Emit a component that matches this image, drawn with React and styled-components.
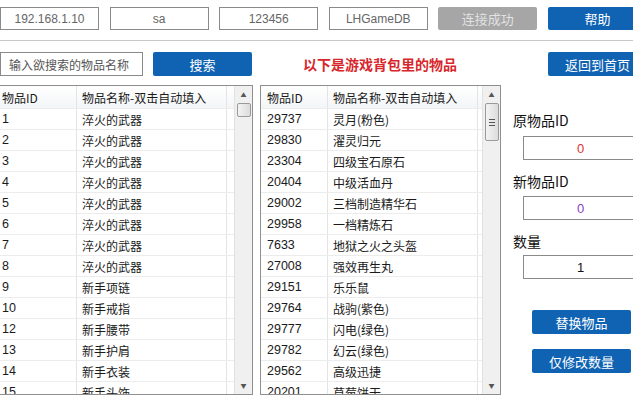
import React from 'react';
import styled, { createGlobalStyle } from 'styled-components';

const Global = createGlobalStyle`
  body {
    margin: 0;
    background: #fff;
    font-family: "Noto Sans CJK SC", "Noto Sans", sans-serif;
  }
`;

const Page = styled.div`
  width: 633px;
  height: 412px;
  overflow: hidden;
`;

const TopBar = styled.div`
  display: flex;
  gap: 10.6px;
  padding-top: 7px;
  height: 23px;
`;

const Field = styled.div`
  flex: none;
  width: ${p => p.w || 99}px;
  height: ${p => p.h || 23}px;
  box-sizing: border-box;
  border: 1px solid #8a8a8a;
  display: flex;
  align-items: center;
  justify-content: ${p => (p.left ? 'flex-start' : 'center')};
  padding-left: ${p => (p.left ? 8 : 0)}px;
  font-size: 12px;
  color: ${p => p.color || '#666'};
  font-family: "Liberation Sans", "Noto Sans CJK SC", sans-serif;
  background: #fff;
`;

const Button = styled.div`
  flex: none;
  width: ${p => p.w || 99}px;
  height: ${p => p.h || 24}px;
  box-sizing: border-box;
  border-radius: 2px;
  background: ${p => (p.gray ? '#a6a6a6' : '#0f63b2')};
  color: ${p => (p.gray ? '#e2e2e2' : '#fff')};
  display: flex;
  align-items: center;
  justify-content: center;
  font-size: 13px;
`;

const Divider = styled.div`
  height: 1px;
  background: #c8c8c8;
  margin-top: 10px;
`;

const SearchRow = styled.div`
  display: flex;
  align-items: center;
  gap: 10px;
  margin-top: 11px;
  height: 24px;
`;

const Title = styled.div`
  flex: none;
  margin-left: 41px;
  width: 235px;
  color: #d7272c;
  font-weight: bold;
  font-size: 14px;
`;

const Main = styled.div`
  display: flex;
  margin-top: 9px;
`;

const Table = styled.div`
  flex: none;
  width: ${p => p.w}px;
  height: 310px;
  box-sizing: border-box;
  border: 1px solid #8f8f8f;
  border-left: ${p => (p.noLeft ? 'none' : '1px solid #8f8f8f')};
  margin-left: ${p => p.ml || 0}px;
  display: flex;
  overflow: hidden;
`;

const Grid = styled.div`
  flex: 1;
  overflow: hidden;
`;

const Row = styled.div`
  display: flex;
  box-sizing: border-box;
  height: ${p => (p.head ? 23 : 21)}px;
  border-bottom: 1px solid #ececec;
  font-size: 12px;
  color: #1a1a1a;
  background: ${p => (p.head ? 'linear-gradient(#ffffff, #f4f5f7)' : '#fff')};
`;

const Cell = styled.div`
  flex: none;
  width: ${p => p.w}px;
  box-sizing: border-box;
  padding-left: ${p => p.pl}px;
  border-right: 1px solid #e4e4e4;
  display: flex;
  align-items: center;
  white-space: nowrap;
  font-family: ${p => (p.num ? '"Liberation Sans", "Noto Sans CJK SC", sans-serif' : '"Noto Sans CJK SC", sans-serif')};
  font-size: ${p => (p.num ? 12.5 : 12)}px;
`;

const Scroll = styled.div`
  flex: none;
  width: 17px;
  background: #f0f0f0;
  border-left: 1px solid #e2e2e2;
  display: flex;
  flex-direction: column;
  align-items: center;
`;

const Arrow = styled.div`
  height: 17px;
  display: flex;
  align-items: center;
  justify-content: center;
  font-size: 6px;
  color: #555;
`;

const Thumb = styled.div`
  width: 14px;
  height: ${p => p.h}px;
  box-sizing: border-box;
  border: 1px solid #9a9a9a;
  border-radius: 2px;
  background: linear-gradient(90deg, #f3f3f3, #dcdcdc);
  display: flex;
  flex-direction: column;
  align-items: center;
  justify-content: center;
  gap: 2px;
`;

const Grip = styled.div`
  width: 6px;
  height: 1px;
  background: #555;
`;

const Track = styled.div`
  flex: 1;
`;

const Side = styled.div`
  flex: 1;
  padding-left: 12px;
  padding-top: 25px;
  display: flex;
  flex-direction: column;
`;

const Label = styled.div`
  font-size: 14px;
  color: #111;
  height: 20px;
  line-height: 20px;
`;

const SideField = styled(Field)`
  margin-left: 10px;
  margin-top: ${p => p.mt}px;
  margin-bottom: 11px;
  width: 115px;
  height: 24px;
  font-size: 13px;
`;

const SideButton = styled(Button)`
  margin-left: 19px;
  margin-top: ${p => p.mt}px;
`;

const left = [
  ['1', '淬火的武器'], ['2', '淬火的武器'], ['3', '淬火的武器'], ['4', '淬火的武器'],
  ['5', '淬火的武器'], ['6', '淬火的武器'], ['7', '淬火的武器'], ['8', '淬火的武器'],
  ['9', '新手项链'], ['10', '新手戒指'], ['12', '新手腰带'], ['13', '新手护肩'],
  ['14', '新手衣装'], ['15', '新手头饰'],
];

const right = [
  ['29737', '灵月(粉色)'], ['29830', '濯灵归元'], ['23304', '四级宝石原石'], ['20404', '中级活血丹'],
  ['29002', '三档制造精华石'], ['29958', '一档精炼石'], ['7633', '地狱之火之头盔'], ['27008', '强效再生丸'],
  ['29151', '乐乐鼠'], ['29764', '战驹(紫色)'], ['29777', '闪电(绿色)'], ['29782', '幻云(绿色)'],
  ['29562', '高级迅捷'], ['20201', '草莓饼干'],
];

const ItemTable = ({ rows, w, c1, pl, ml, noLeft, thumb, grip }) => (
  <Table w={w} ml={ml} noLeft={noLeft}>
    <Grid>
      <Row head>
        <Cell w={c1} pl={pl}>物品ID</Cell>
        <Cell w={150} pl={5}>物品名称-双击自动填入</Cell>
      </Row>
      {rows.map(([id, name]) => (
        <Row key={id}>
          <Cell w={c1} pl={pl} num>{id}</Cell>
          <Cell w={150} pl={5}>{name}</Cell>
        </Row>
      ))}
    </Grid>
    <Scroll>
      <Arrow>▲</Arrow>
      <Thumb h={thumb}>
        {grip && <><Grip /><Grip /><Grip /></>}
      </Thumb>
      <Track />
      <Arrow>▼</Arrow>
    </Scroll>
  </Table>
);

export default function App() {
  return (
    <Page>
      <Global />
      <TopBar>
        <Field>192.168.1.10</Field>
        <Field>sa</Field>
        <Field>123456</Field>
        <Field>LHGameDB</Field>
        <Button gray h={23}>连接成功</Button>
        <Button h={23}>帮助</Button>
      </TopBar>
      <Divider />
      <SearchRow>
        <Field w={143} h={24} left color="#555">输入欲搜索的物品名称</Field>
        <Button>搜索</Button>
        <Title>以下是游戏背包里的物品</Title>
        <Button>返回到首页</Button>
      </SearchRow>
      <Main>
        <ItemTable rows={left} w={253} c1={77} pl={2} noLeft thumb={14} />
        <ItemTable rows={right} w={241} c1={67} pl={6} ml={7} thumb={38} grip />
        <Side>
          <Label>原物品ID</Label>
          <SideField mt={6} color="#d33">0</SideField>
          <Label>新物品ID</Label>
          <SideField mt={5} color="#8a3fc0">0</SideField>
          <Label>数量</Label>
          <SideField mt={4} color="#111">1</SideField>
          <SideButton mt={20}>替换物品</SideButton>
          <SideButton mt={15}>仅修改数量</SideButton>
        </Side>
      </Main>
    </Page>
  );
}
